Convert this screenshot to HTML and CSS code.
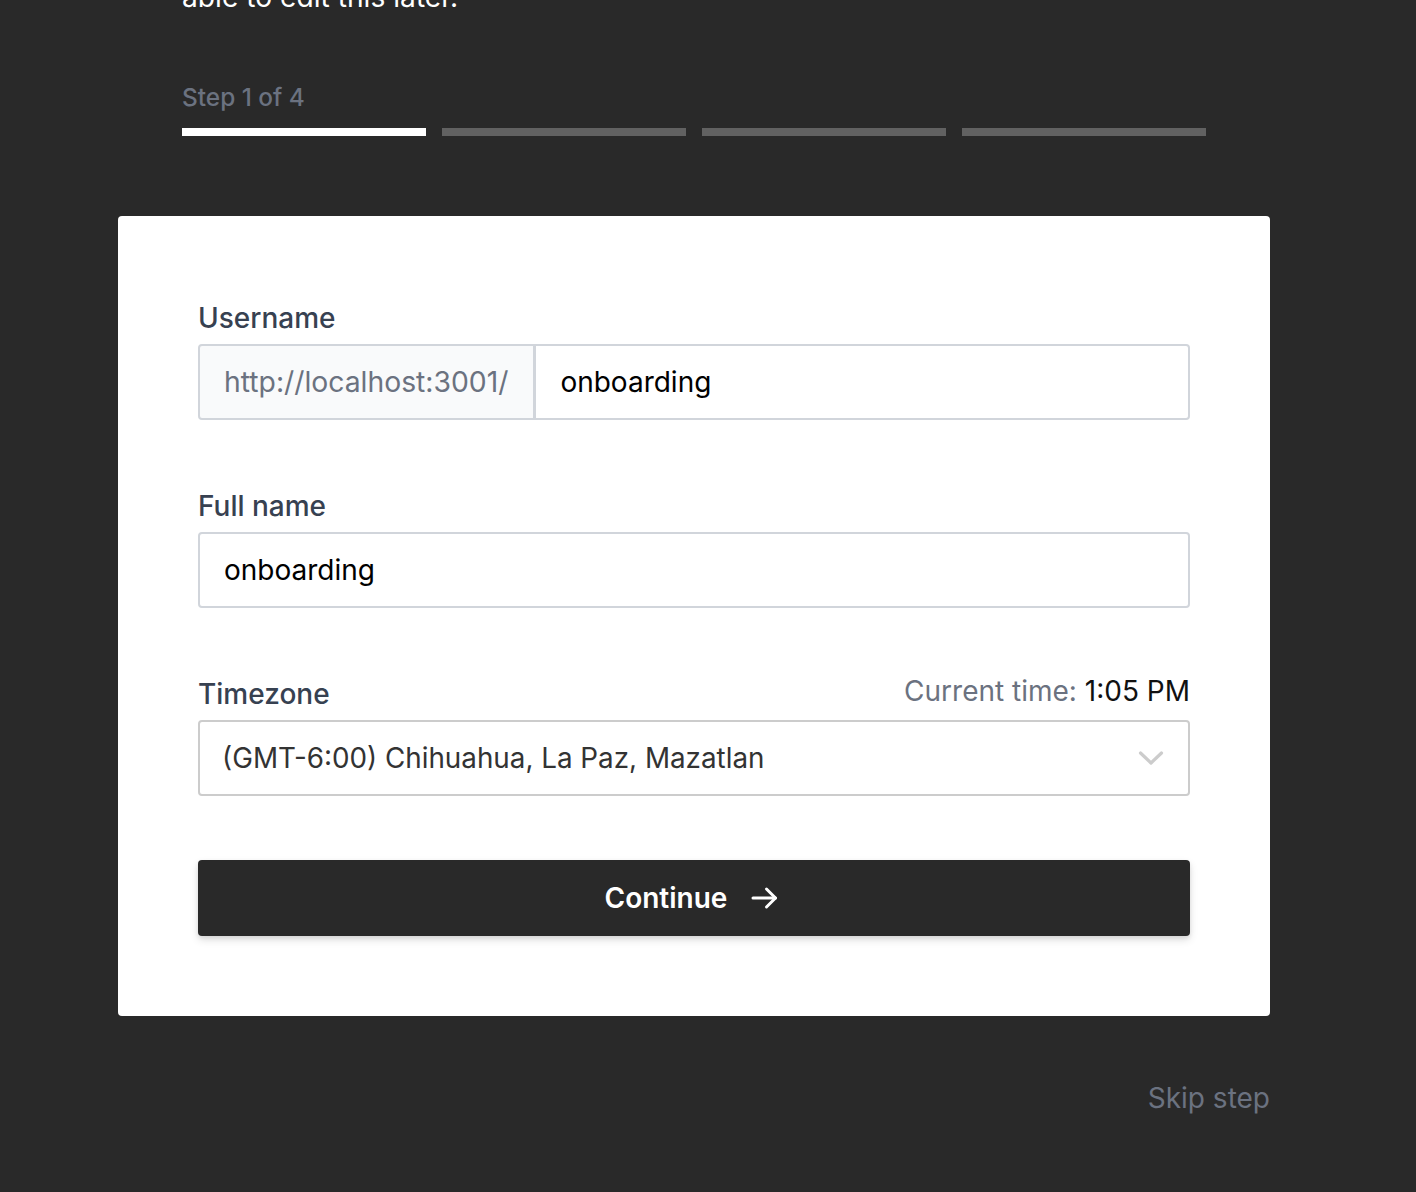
FILE: index.html
```html
<!DOCTYPE html>
<html lang="en">
<head>
<meta charset="utf-8">
<title>Onboarding</title>
<link rel="stylesheet" href="styles.css">
</head>
<body>
<main class="page">
  <header class="intro">
    <p class="desc">able to edit this later.</p>
    <div class="steps">
      <p class="step-label">Step 1 of 4</p>
      <div class="bars">
        <span class="bar bar-active"></span>
        <span class="bar"></span>
        <span class="bar"></span>
        <span class="bar"></span>
      </div>
    </div>
  </header>

  <section class="card">
    <form class="form">
      <div class="field field-username">
        <label class="label" for="username">Username</label>
        <div class="input-group">
          <span class="prefix">http://localhost:3001/</span>
          <input id="username" class="input input-joined" type="text" value="onboarding">
        </div>
      </div>

      <div class="field field-name">
        <label class="label" for="fullname">Full name</label>
        <input id="fullname" class="input" type="text" value="onboarding">
      </div>

      <div class="field field-timezone">
        <div class="label-row">
          <span class="label">Timezone</span>
          <span class="current-time"><span class="muted">Current time:</span> 1:05 PM</span>
        </div>
        <div class="select">
          <span class="select-value">(GMT-6:00) Chihuahua, La Paz, Mazatlan</span>
          <svg class="chevron" width="26" height="16" viewBox="0 0 26 16" aria-hidden="true">
            <polyline points="2.5,3 13,13 23.5,3" fill="none" stroke="currentColor" stroke-width="3.2" stroke-linecap="round" stroke-linejoin="round"/>
          </svg>
        </div>
      </div>

      <button type="button" class="btn-primary">
        <span>Continue</span>
        <svg width="36" height="36" viewBox="0 0 24 24" fill="none" stroke="currentColor" stroke-width="2" stroke-linecap="round" stroke-linejoin="round" aria-hidden="true">
          <path d="M4 12h15"/>
          <path d="M13 6l6 6-6 6"/>
        </svg>
      </button>
    </form>
  </section>

  <div class="skip-row">
    <button type="button" class="btn-skip">Skip step</button>
  </div>
</main>
</body>
</html>
```

FILE: styles.css
```css
* { box-sizing: border-box; }

html, body {
  margin: 0;
  padding: 0;
  background: #292929;
  font-family: Inter, "Noto Sans", "Liberation Sans", sans-serif;
  overflow: hidden;
}

.page {
  width: 1152px;
  margin-left: 118px;
  display: flex;
  flex-direction: column;
}

.intro {
  padding: 0 64px;
}

.desc {
  margin: -23px 0 0;
  color: #ffffff;
  font-size: 28.2px;
  line-height: 40px;
}

.steps {
  margin-top: 64px;
}

.step-label {
  margin: 0;
  color: #6b7280;
  font-size: 24.4px;
  line-height: 32px;
  font-weight: 500;
}

.bars {
  margin-top: 15px;
  display: grid;
  grid-template-columns: repeat(4, 1fr);
  gap: 16px;
}

.bar {
  height: 8px;
  background: #616161;
}

.bar-active {
  background: #ffffff;
}

.card {
  margin-top: 80px;
  background: #ffffff;
  border-radius: 4px;
  padding: 86px 80px 80px;
}

.form {
  display: flex;
  flex-direction: column;
}

.field {
  display: flex;
  flex-direction: column;
}

.field-username { margin-bottom: 70px; }
.field-name { margin-bottom: 67px; }
.field-timezone { margin-bottom: 64px; }

.label {
  display: block;
  color: #374151;
  font-size: 28px;
  line-height: 32px;
  font-weight: 500;
  margin-bottom: 10px;
}

.label-row {
  display: flex;
  justify-content: space-between;
  align-items: flex-end;
}

.current-time {
  color: #111111;
  font-size: 28px;
  line-height: 32px;
  margin-bottom: 13px;
}

.muted {
  color: #6b7280;
}

.input-group {
  display: flex;
  height: 76px;
}

.prefix {
  display: flex;
  align-items: center;
  padding: 0 25px 0 24px;
  background: #f9fafb;
  border: 2px solid #d1d5db;
  border-right-width: 3px;
  border-radius: 4px 0 0 4px;
  color: #6b7280;
  font-size: 28.3px;
  white-space: nowrap;
}

.input {
  height: 76px;
  width: 100%;
  border: 2px solid #d1d5db;
  border-radius: 4px;
  padding: 0 24px;
  font-family: inherit;
  font-size: 28px;
  color: #000000;
  background: #ffffff;
  outline: none;
}

.input-joined {
  flex: 1;
  border-left: none;
  border-radius: 0 4px 4px 0;
}

.select {
  height: 76px;
  border: 2px solid #cccccc;
  border-radius: 4px;
  display: flex;
  align-items: center;
  justify-content: space-between;
  padding: 0 24px 0 22px;
}

.select-value {
  color: #333333;
  font-size: 27.8px;
}

.chevron {
  color: #cccccc;
}

.btn-primary {
  height: 76px;
  width: 100%;
  border: none;
  border-radius: 4px;
  background: #292929;
  color: #ffffff;
  font-family: inherit;
  font-size: 28px;
  font-weight: 600;
  display: flex;
  align-items: center;
  justify-content: center;
  gap: 20px;
  box-shadow: 0 4px 8px rgba(0, 0, 0, 0.12), 0 2px 4px rgba(0, 0, 0, 0.08);
  cursor: pointer;
}

.skip-row {
  display: flex;
  justify-content: flex-end;
  margin-top: 64px;
}

.btn-skip {
  background: none;
  border: none;
  padding: 0;
  color: #6b7280;
  font-family: inherit;
  font-size: 28px;
  line-height: 36px;
  cursor: pointer;
}
```
